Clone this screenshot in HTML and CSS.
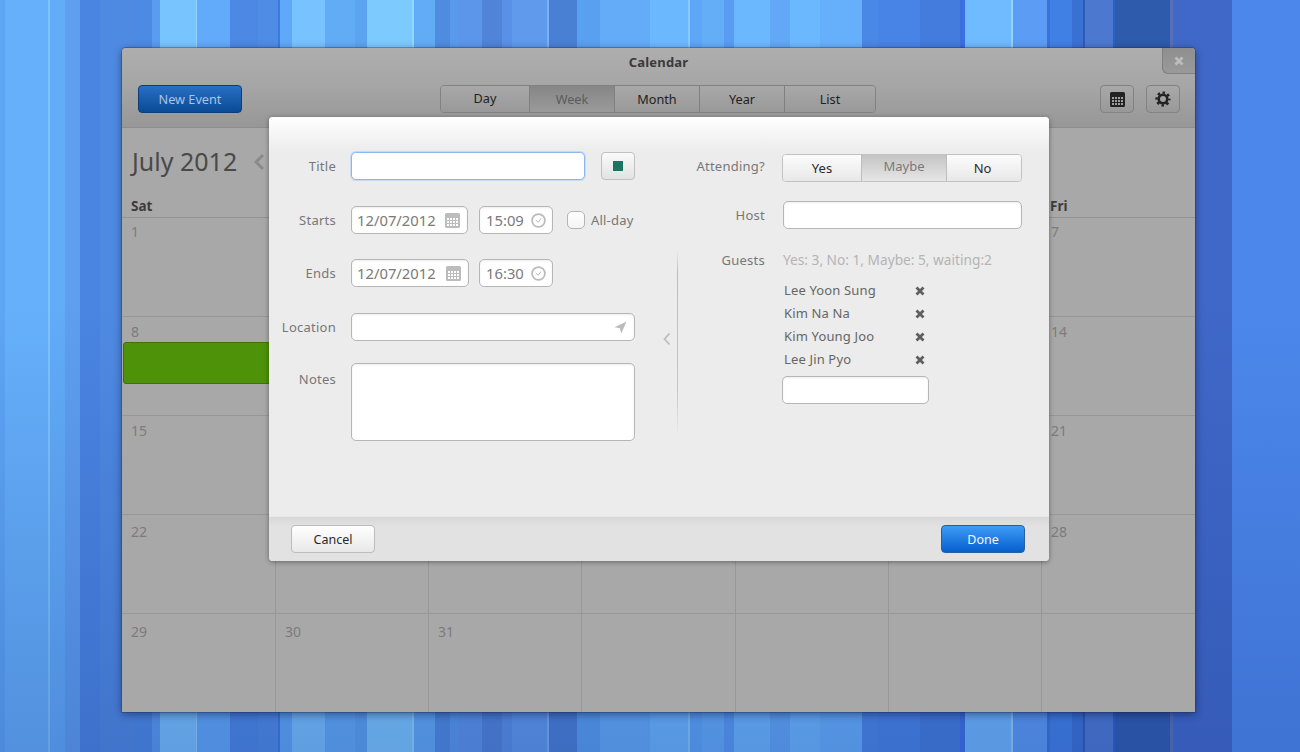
FILE: index.html
```html
<!DOCTYPE html>
<html lang="en">
<head>
<meta charset="utf-8">
<title>Calendar</title>
<link rel="stylesheet" href="styles.css">
</head>
<body>
<svg class="defs" width="0" height="0" aria-hidden="true">
  <symbol id="i-cal" viewBox="0 0 15 15"><path fill-rule="evenodd" d="M1.500 0h12A1.500 1.500 0 0 1 15 1.500v12a1.500 1.500 0 0 1-1.500 1.500h-12A1.500 1.500 0 0 1 0 13.500v-12A1.500 1.500 0 0 1 1.500 0zM2 5v2h2V5zm3 0v2h2V5zm3 0v2h2V5zm3 0v2h2V5zM2 8v2h2V8zm3 0v2h2V8zm3 0v2h2V8zm3 0v2h2V8zM2 11v2h2v-2zm3 0v2h2v-2zm3 0v2h2v-2zm3 0v2h2v-2z"/></symbol>
  <symbol id="i-clock" viewBox="0 0 15 15"><circle cx="7.500" cy="7.500" r="6.400" fill="none" stroke="currentColor" stroke-width="1.800"/><path d="M4.800 7l2.500 2.200 2.600-3.600" fill="none" stroke="currentColor" stroke-width="1"/></symbol>
  <symbol id="i-x" viewBox="0 0 10 10"><path d="M1.500 1.500l7 7M8.500 1.500l-7 7" fill="none" stroke="currentColor" stroke-width="2.800"/></symbol>
</svg>
<div class="window">
  <header class="titlebar">
    <span class="wintitle">Calendar</span>
    <span class="close"><svg width="10" height="10"><use href="#i-x"/></svg></span>
  </header>
  <div class="toolbar">
    <button class="newevent">New Event</button>
    <div class="viewseg">
      <span class="vday">Day</span><span class="vweek">Week</span><span class="vmonth">Month</span><span class="vyear">Year</span><span class="vlist">List</span>
    </div>
    <div class="tools">
      <span class="tool"><svg width="15" height="15"><use href="#i-cal"/></svg></span>
      <span class="tool"><svg width="16" height="16" viewBox="0 0 16 16"><circle cx="8" cy="8" r="4.300" fill="none" stroke="#222" stroke-width="2.600"/><circle cx="8" cy="8" r="6.400" fill="none" stroke="#222" stroke-width="2.400" stroke-dasharray="2.500 2.527" stroke-dashoffset="1.250"/></svg></span>
    </div>
  </div>
  <div class="calhead">
    <span class="month">July 2012</span>
    <svg class="prev" width="12" height="18" viewBox="0 0 12 18"><path d="M10 2L3 9l7 7" fill="none" stroke="#8a8a8a" stroke-width="3"/></svg>
  </div>
  <div class="weekdays"><span>Sat</span><span></span><span></span><span></span><span></span><span></span><span class="wd-fri">Fri</span></div>
  <div class="grid">
    <div class="cell">1</div><div class="cell"></div><div class="cell"></div><div class="cell"></div><div class="cell"></div><div class="cell"></div><div class="cell">7</div>
    <div class="cell">8<div class="event"></div></div><div class="cell"></div><div class="cell"></div><div class="cell"></div><div class="cell"></div><div class="cell"></div><div class="cell">14</div>
    <div class="cell">15</div><div class="cell"></div><div class="cell"></div><div class="cell"></div><div class="cell"></div><div class="cell"></div><div class="cell">21</div>
    <div class="cell">22</div><div class="cell"></div><div class="cell"></div><div class="cell"></div><div class="cell"></div><div class="cell"></div><div class="cell">28</div>
    <div class="cell">29</div><div class="cell">30</div><div class="cell">31</div><div class="cell"></div><div class="cell"></div><div class="cell"></div><div class="cell"></div>
  </div>

  <div class="dialog">
    <div class="dialog-body">
      <div class="pane-left">
        <div class="row row-title">
          <label class="lab">Title</label>
          <div class="field focus w-title"></div>
          <span class="colorbtn"><i class="swatch"></i></span>
        </div>
        <div class="row row-starts">
          <label class="lab">Starts</label>
          <div class="field w-date"><span>12/07/2012</span><svg class="ic" width="15" height="15"><use href="#i-cal"/></svg></div>
          <div class="field w-time"><span>15:09</span><svg class="ic" width="15" height="15"><use href="#i-clock"/></svg></div>
          <span class="check"></span><span class="allday">All-day</span>
        </div>
        <div class="row row-ends">
          <label class="lab">Ends</label>
          <div class="field w-date2"><span>12/07/2012</span><svg class="ic" width="15" height="15"><use href="#i-cal"/></svg></div>
          <div class="field w-time w-time2"><span>16:30</span><svg class="ic" width="15" height="15"><use href="#i-clock"/></svg></div>
        </div>
        <div class="row row-loc">
          <label class="lab">Location</label>
          <div class="field w-loc"><svg class="ic locarrow" width="13" height="13" viewBox="0 0 13 13"><path d="M12.500 0.500L0.500 6.200l5.300 1 1.500 5.300z"/></svg></div>
        </div>
        <div class="row row-notes">
          <label class="lab lab-notes">Notes</label>
          <div class="field w-notes"></div>
        </div>
      </div>
      <div class="divider">
        <svg class="collapse" width="8" height="14" viewBox="0 0 8 14"><path d="M6.500 1.500L1.500 7l5 5.500" fill="none" stroke="#bdbdbd" stroke-width="1.800"/></svg>
      </div>
      <div class="pane-right">
        <div class="row row-att">
          <label class="lab lab-r lab-att">Attending?</label>
          <div class="attseg"><span class="ayes">Yes</span><span class="amaybe">Maybe</span><span class="ano">No</span></div>
        </div>
        <div class="row row-host">
          <label class="lab lab-r">Host</label>
          <div class="field w-host"></div>
        </div>
        <div class="row row-guests">
          <label class="lab lab-r">Guests</label>
          <span class="summary">Yes: 3, No: 1, Maybe: 5, waiting:2</span>
        </div>
        <ul class="guestlist">
          <li><span>Lee Yoon Sung</span><svg width="10" height="10"><use href="#i-x"/></svg></li>
          <li><span>Kim Na Na</span><svg width="10" height="10"><use href="#i-x"/></svg></li>
          <li><span>Kim Young Joo</span><svg width="10" height="10"><use href="#i-x"/></svg></li>
          <li><span>Lee Jin Pyo</span><svg width="10" height="10"><use href="#i-x"/></svg></li>
        </ul>
        <div class="field w-guest"></div>
      </div>
    </div>
    <footer class="dialog-foot">
      <button class="cancel">Cancel</button>
      <button class="done">Done</button>
    </footer>
  </div>
</div>
</body>
</html>
```

FILE: styles.css
```css
* { box-sizing: border-box; }
html, body { margin: 0; height: 100%; }
body {
  width: 1300px; height: 752px; overflow: hidden;
  padding: 48px 0 0 122px;
  font-family: "Noto Sans", sans-serif;
  font-size: 13px;
  background:
    linear-gradient(180deg, rgba(25,55,140,0) 0%, rgba(25,55,140,0) 40%, rgba(25,55,140,.26) 100%),
    linear-gradient(90deg,
      #5ea6f6 0 5px, #66b0fb 5px 48px, #7cc4ff 48px 50px, #62acf8 50px 65px, #5f9ff0 65px 80px,
      #4a85e2 80px 100px, #4f8ae2 100px 135px, #4d8ae4 135px 152px, #5a9cef 152px 160px,
      #78c4ff 160px 196px, #92d2ff 196px 197px, #62aafa 197px 230px, #4c88e4 230px 258px,
      #4f8ce6 258px 278px, #3f78dc 278px 280px, #60a8f8 280px 292px, #78c2ff 292px 325px,
      #62acf6 325px 355px, #5ca4f0 355px 367px, #7ccaff 367px 412px, #92d6ff 412px 414px,
      #62acf6 414px 435px, #4f8ce0 435px 450px, #5a9aec 450px 458px, #5c96ea 458px 482px,
      #5084d8 482px 502px, #5a90e6 502px 512px, #5f9aec 512px 547px, #7cb0f8 547px 549px,
      #4a80d4 549px 577px, #5aa0f0 577px 600px, #64acf8 600px 650px, #6cb8ff 650px 688px,
      #84ccff 688px 690px, #5ea6f6 690px 702px, #64aef8 702px 724px, #5a9cf4 724px 734px,
      #6cb8ff 734px 770px, #62a8f6 770px 790px, #6cb8ff 790px 820px, #66b0fb 820px 862px,
      #4a88e6 862px 878px, #4884e6 878px 920px, #437cdc 920px 960px, #3a70e0 960px 965px,
      #70baff 965px 1011px, #94d2ff 1011px 1013px, #5c9cf4 1013px 1047px, #3a72dc 1047px 1050px,
      #4080e4 1050px 1072px, #3a70d4 1072px 1083px, #2f5cb0 1083px 1085px, #4c78d0 1085px 1113px,
      #2a60c8 1113px 1115px, #2f5bac 1115px 1170px, #5570b8 1170px 1173px, #4068c8 1173px 1232px,
      #4c88ec 1232px);
}
button { font: inherit; cursor: default; }
.defs { position: absolute; }

.window {
  position: relative;
  width: 1073px; height: 664px;
  background: #a8a8a8;
  border-radius: 4px 4px 0 0;
  box-shadow: 0 0 0 1px rgba(30,50,90,.35), 0 2px 8px rgba(0,0,30,.45);
  color: #333;
}
.titlebar {
  position: relative;
  height: 37px;
  display: flex; justify-content: center; align-items: center;
  padding-bottom: 9px;
  background: linear-gradient(#aeaeae, #a6a6a6);
  border-radius: 4px 4px 0 0;
}
.wintitle { font-weight: 700; font-size: 13px; letter-spacing: .2px; color: #3a3a3a; }
.close {
  position: absolute; right: 0; top: 0;
  width: 33px; height: 26px;
  display: flex; align-items: center; justify-content: center;
  background: linear-gradient(#8e8e8e, #9a9a9a);
  border-left: 1px solid #7f7f7f; border-bottom: 1px solid #7f7f7f;
  border-radius: 0 4px 0 6px;
  color: #bdbdbd;
}
.toolbar {
  height: 43px;
  display: flex; align-items: flex-start;
  padding: 0 15px 0 16px;
  border-bottom: 1px solid #8d8d8d;
  background: linear-gradient(#a6a6a6, #979797);
}
.newevent {
  width: 104px; height: 28px; padding: 0;
  background: linear-gradient(#2770c4, #0a4a96);
  border: 1px solid #0d3c78; border-radius: 4px;
  color: #a9c5e6;
  font-size: 12.700px;
}
.viewseg {
  display: flex;
  margin-left: 198px;
  width: 436px; height: 28px;
  border: 1px solid #828282; border-radius: 4px;
  color: #222;
  overflow: hidden;
  font-size: 12.700px;
}
.viewseg span {
  display: flex; align-items: center; justify-content: center;
  border-right: 1px solid #808080;
  background: linear-gradient(#a8a8a8, #999);
}
.vday { width: 89px; padding-bottom: 2px; }
.viewseg .vweek { width: 85px; background: linear-gradient(#868686, #9a9a9a); color: #5c5c5c; }
.vmonth, .vyear { width: 85px; }
.viewseg .vlist { flex: 1; border-right: 0; }
.tools { margin-left: auto; display: flex; gap: 12px; }
.tool {
  width: 34px; height: 28px;
  display: flex; align-items: center; justify-content: center;
  border: 1px solid #828282; border-radius: 4px;
  background: linear-gradient(#a8a8a8, #999);
  fill: #222;
}

.calhead {
  height: 65px; display: flex; align-items: center; gap: 16px;
  padding: 0 0 0 10px;
}
.month { font-size: 25px; color: #4a4a4a; }
.prev { margin-top: 3px; }
.weekdays {
  display: grid; grid-template-columns: 154px 153px 153px 154px 153px 153px 153px;
  height: 25px; border-bottom: 1px solid #929292;
}
.weekdays span { padding: 4px 0 0 9px; font-weight: 700; font-size: 13.500px; color: #3c3c3c; }
.weekdays .wd-fri { padding-left: 8px; }
.grid {
  display: grid;
  grid-template-columns: 154px 153px 153px 154px 153px 153px 153px;
  grid-auto-rows: 99px;
  height: 494px; overflow: hidden;
}
.cell {
  position: relative;
  padding: 5px 0 0 9px;
  font-size: 14px; color: #7c7c7c;
  border-right: 1px solid #979797;
  border-bottom: 1px solid #979797;
}
.cell:nth-child(-n+7) { padding-top: 4px; }
.cell:nth-child(n+22) { padding-top: 7px; }
.cell:nth-child(n+29) { padding-top: 8px; border-bottom: 0; }
.cell:nth-child(7n) { border-right: 0; }
.event {
  position: absolute; left: 1px; top: 25px;
  width: 160px; height: 42px;
  background: #4d9208;
  border: 1px solid #3d7406;
  border-radius: 3px;
}

.dialog {
  position: absolute; left: 147px; top: 69px;
  width: 780px; height: 444px;
  display: flex; flex-direction: column;
  background: #ececec;
  border-radius: 4px;
  box-shadow: 0 1px 5px rgba(0,0,0,.4);
  color: #777;
}
.dialog-body {
  flex: 1; display: flex;
  background: linear-gradient(#fff 0, #ececec 34px);
  border-radius: 4px 4px 0 0;
}
.pane-left { width: 366px; padding: 35px 0 0 0; }
.pane-right { flex: 1; padding: 37px 0 0 0; margin-left: 4px; }
.row { display: flex; align-items: center; }
.lab { width: 67px; text-align: right; margin-right: 15px; flex: none; color: #777; letter-spacing: .25px; }
.lab-r { width: 83px; margin-right: 17px; }
.lab-att { margin-bottom: 4px; }
.row-starts { margin-top: 26px; }
.row-ends { margin-top: 25px; }
.row-loc { margin-top: 26px; }
.row-notes { margin-top: 22px; align-items: flex-start; }
.lab-notes { padding-top: 7px; }

.field {
  height: 28px; flex: none;
  display: flex; align-items: center; justify-content: space-between;
  padding: 0 6px 0 5px;
  background: #fff;
  border: 1px solid #b6b6b6; border-radius: 5px;
  box-shadow: inset 0 1px 2px rgba(0,0,0,.08);
  font-size: 14.800px; color: #7a7a7a;
}
.focus { border-color: #8ab8ec; box-shadow: 0 0 0 1px rgba(160,200,245,.5); }
.w-title { width: 234px; }
.colorbtn {
  margin-left: 16px; width: 34px; height: 28px;
  display: flex; align-items: center; justify-content: center;
  background: linear-gradient(#fafafa, #e2e2e2);
  border: 1px solid #c0c0c0; border-radius: 4px;
}
.swatch { width: 10px; height: 10px; background: #1c7560; }
.w-date { width: 117px; }
.w-date2 { width: 118px; }
.w-date .ic, .w-date2 .ic { margin-right: 1px; }
.w-time { width: 74px; margin-left: 11px; padding-left: 6px; }
.w-time2 { margin-left: 10px; }
.ic { fill: #bcbcbc; color: #bcbcbc; flex: none; }
.check {
  width: 18px; height: 18px; margin-left: 14px;
  background: linear-gradient(#fff, #f4f4f4);
  border: 1px solid #b4b4b4; border-radius: 5px;
}
.allday { margin-left: 6px; letter-spacing: .2px; }
.w-loc { width: 284px; justify-content: flex-end; }
.locarrow { margin-right: 1px; }
.w-notes { width: 284px; height: 78px; }

.divider {
  position: relative;
  width: 1px; margin: 133px 0 80px 42px;
  background: linear-gradient(#ececec, #bcbcbc 12%, #c4c4c4 75%, #ececec);
  flex: none;
}
.collapse { position: absolute; left: -14px; top: 82px; }
.attseg {
  display: flex; width: 240px; height: 28px;
  border: 1px solid #c2c2c2; border-radius: 4px; overflow: hidden;
  color: #2a2a2a;
}
.attseg span {
  display: flex; align-items: center; justify-content: center;
  background: linear-gradient(#fcfcfc, #e8e8e8);
}
.ayes { width: 79px; border-right: 1px solid #bcbcbc; padding-bottom: 1px; }
.attseg .amaybe { width: 85px; padding-bottom: 4px; color: #7a7a7a; background: linear-gradient(#c4c4c4, #e6e6e6); border-right: 1px solid #bcbcbc; }
.ano { flex: 1; padding: 0 3px 1px 0; }
.row-host { margin-top: 19px; }
.w-host { width: 239px; margin-left: 1px; }
.row-guests { margin-top: 21px; }
.summary { color: #b4b4b4; margin-left: 1px; font-size: 13.700px; }
.guestlist {
  list-style: none; margin: 9px 0 0 101px; padding: 0;
  width: 146px;
}
.guestlist li {
  height: 23px; display: flex; align-items: center; justify-content: space-between;
  padding: 0 4px 0 1px;
  color: #666;
  letter-spacing: .15px;
}
.guestlist svg { color: #5e5e5e; margin-top: 2px; }
.w-guest { width: 147px; margin: 6px 0 0 100px; }

.dialog-foot {
  height: 45px; flex: none;
  display: flex; justify-content: space-between; align-items: center;
  padding: 0 24px 0 22px;
  background: linear-gradient(#d8d8d8, #e2e2e2 10px);
  border-top: 1px solid #e6e6e6;
  border-radius: 0 0 4px 4px;
}
.dialog-foot button { width: 84px; height: 28px; padding: 0; border-radius: 4px; font-size: 12.500px; }
.cancel {
  background: linear-gradient(#fff, #e8e8e8);
  border: 1px solid #bcbcbc;
  color: #2a2a2a;
}
.done {
  background: linear-gradient(#3f9bf5, #0560cf);
  border: 1px solid #2a5e9e;
  color: #f2f7ff;
}
```
